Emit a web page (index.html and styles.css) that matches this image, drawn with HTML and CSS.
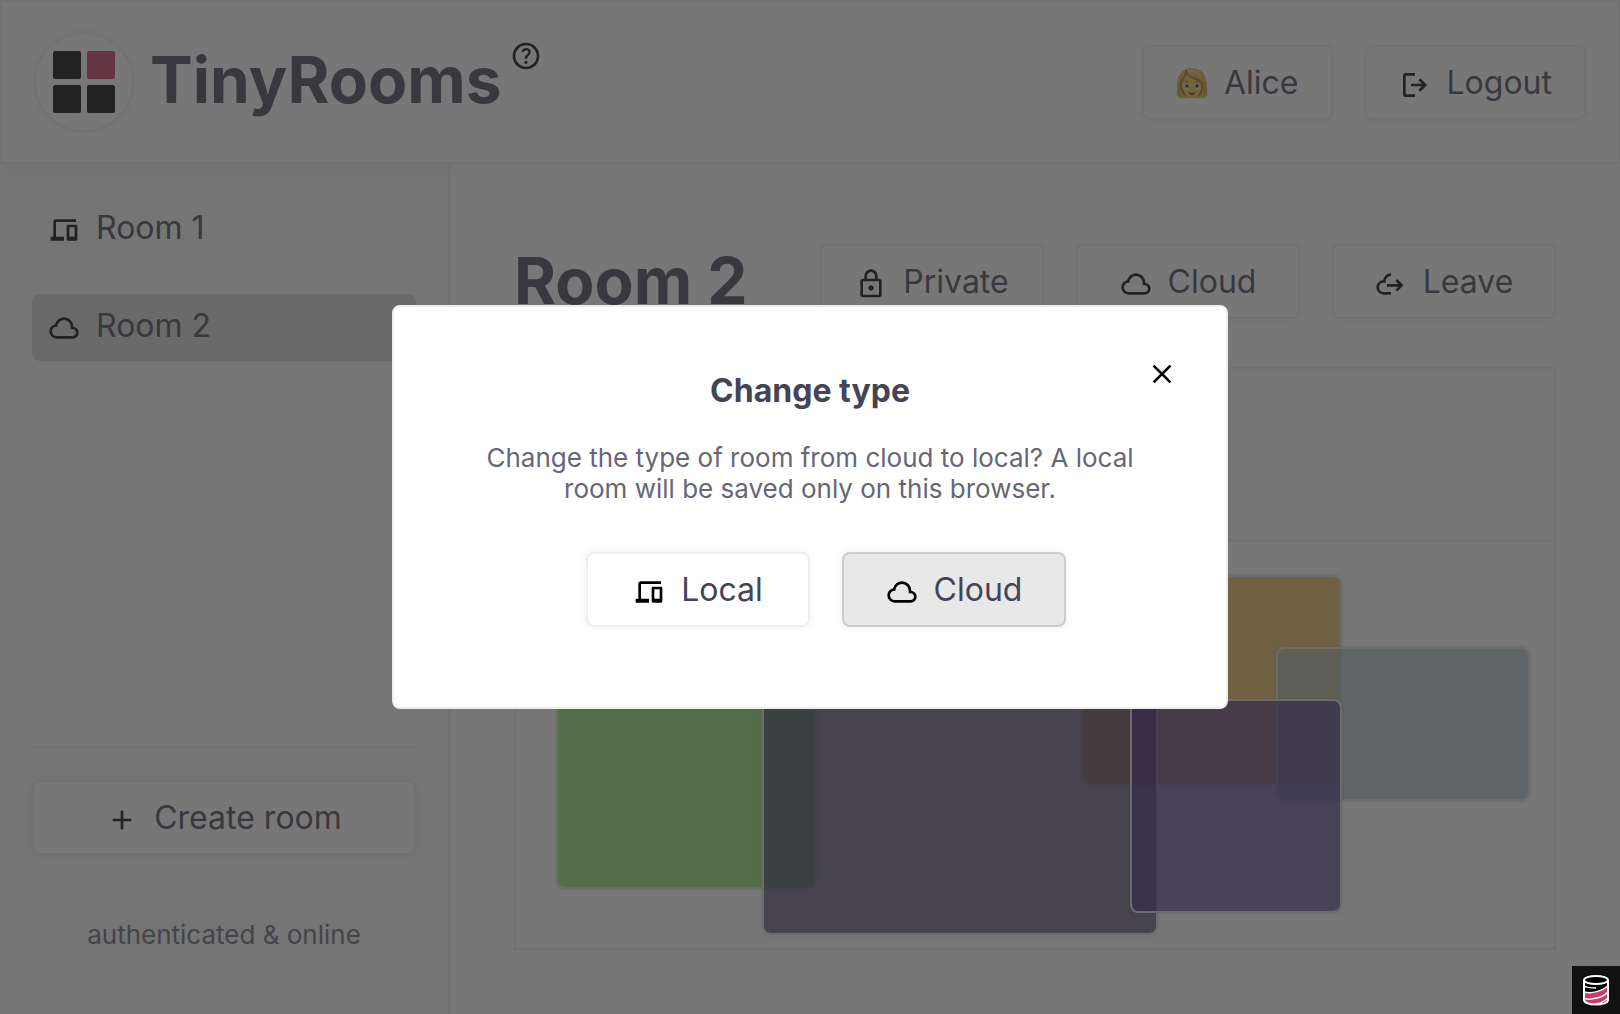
FILE: index.html
```html
<!DOCTYPE html>
<html lang="en">
<head>
<meta charset="utf-8">
<meta name="viewport" content="width=device-width, initial-scale=1">
<title>TinyRooms</title>
<link rel="stylesheet" href="styles.css">
</head>
<body>
<svg class="sprite" aria-hidden="true">
  <symbol id="cloud" viewBox="0 -960 960 960"><path d="M260-160q-91 0-155.500-63T40-377q0-78 47-139t123-78q25-92 100-149t170-57q117 0 198.500 81.500T760-520q69 8 114.500 59.500T920-340q0 75-52.500 127.500T740-160H260Zm0-80h480q42 0 71-29t29-71q0-42-29-71t-71-29h-60v-80q0-83-58.500-141.500T480-720q-83 0-141.500 58.500T280-520h-20q-58 0-99 41t-41 99q0 58 41 99t99 41Z"/></symbol>
  <symbol id="devices" viewBox="0 -960 960 960"><path d="M80-160v-120h80v-440q0-33 23.500-56.500T240-800h600v80H240v440h240v120H80Zm520 0q-17 0-28.500-11.500T560-200v-400q0-17 11.500-28.500T600-640h240q17 0 28.500 11.500T880-600v400q0 17-11.500 28.500T840-160H600Zm40-120h160v-280H640v280Z"/></symbol>
  <symbol id="lock" viewBox="0 -960 960 960"><path d="M240-80q-33 0-56.500-23.500T160-160v-400q0-33 23.500-56.500T240-640h40v-80q0-83 58.500-141.500T480-920q83 0 141.500 58.500T680-720v80h40q33 0 56.500 23.500T800-560v400q0 33-23.500 56.500T720-80H240Zm0-80h480v-400H240v400Zm240-120q33 0 56.500-23.500T560-360q0-33-23.500-56.500T480-440q-33 0-56.500 23.500T400-360q0 33 23.500 56.500T480-280ZM360-640h240v-80q0-50-35-85t-85-35q-50 0-85 35t-35 85v80Z"/></symbol>
  <symbol id="logout" viewBox="0 -960 960 960"><path d="M200-120q-33 0-56.500-23.500T120-200v-560q0-33 23.500-56.500T200-840h280v80H200v560h280v80H200Zm440-160-55-58 102-102H360v-80h327L585-622l55-58 200 200-200 200Z"/></symbol>
  <symbol id="help" viewBox="0 -960 960 960"><path d="M478-240q21 0 35.500-14.500T528-290q0-21-14.500-35.500T478-340q-21 0-35.500 14.500T428-290q0 21 14.500 35.500T478-240Zm-36-154h74q0-33 7.500-52t42.500-52q26-26 41-49.500t15-56.500q0-56-41-86t-97-30q-57 0-92.500 30T342-618l66 26q5-18 22.500-39t53.500-21q32 0 48 17.500t16 38.500q0 20-12 37.500T506-526q-44 39-54 59t-10 73Zm38 314q-83 0-156-31.500T197-197q-54-54-85.500-127T80-480q0-83 31.500-156T197-763q54-54 127-85.500T480-880q83 0 156 31.500T763-763q54 54 85.500 127T880-480q0 83-31.500 156T763-197q-54 54-127 85.500T480-80Zm0-80q134 0 227-93t93-227q0-134-93-227t-227-93q-134 0-227 93t-93 227q0 134 93 227t227 93Z"/></symbol>
  <symbol id="close" viewBox="0 -960 960 960"><path d="m256-200-56-56 224-224-224-224 56-56 224 224 224-224 56 56-224 224 224 224-56 56-224-224-224 224Z"/></symbol>
  <symbol id="add" viewBox="0 -960 960 960"><path d="M440-440H200v-80h240v-240h80v240h240v80H520v240h-80v-240Z"/></symbol>
  <symbol id="leave" viewBox="0 0 24 24"><path d="M12 5C9.200 5 7 7.200 7 10h-.5A4.500 4.500 0 0 0 2 14.500 4.500 4.500 0 0 0 6.500 19H12M9 13h11M16 9l4 4-4 4" fill="none" stroke="currentColor" stroke-width="2"/></symbol>
</svg>

<div class="app">
  <header class="header">
    <div class="brand">
      <svg class="logo" viewBox="0 0 96 96" aria-hidden="true">
        <rect x="17" y="17" width="28" height="28" rx="2"/>
        <rect class="accent" x="51" y="17" width="28" height="28" rx="2"/>
        <rect x="17" y="51" width="28" height="28" rx="2"/>
        <rect x="51" y="51" width="28" height="28" rx="2"/>
      </svg>
      <h1 class="title">TinyRooms</h1>
      <a class="help" href="#help" aria-label="Help"><svg><use href="#help"/></svg></a>
    </div>
    <nav class="account">
      <button class="button" type="button">
        <svg class="avatar" viewBox="0 0 32 32" aria-hidden="true">
          <path d="M16 2C7 2 1 9 1 19c0 4-1 8 0 11 1 2 5 2 7 2h16c2 0 6 0 7-2 1-3 0-7 0-11C31 9 25 2 16 2Z" fill="#e0b04c"/>
          <path d="M5 12C3 18 3 25 4 30M27 12c2 6 2 13 1 18" fill="none" stroke="#b98632" stroke-width="1"/>
          <path d="M6 17c2-2 4-5 5-8 3 4 10 5 14 9 1 6 0 9-3 12-3 2-9 2-12 0-3-3-5-8-4-13Z" fill="#f0c450"/>
          <path d="M10 4c0 3 1 5 3 6 4 3 11 3 13 7 1 6 0 10-4 13M9 8c0 3-3 6-4 9 0 6 2 10 5 13" fill="none" stroke="#94601f" stroke-width="1.500"/>
          <path d="M12 5c3-1 9 0 12 5" fill="none" stroke="#f6d684" stroke-width="2"/>
          <path d="M9 16q2-1 3 0M19 16q2-1 3 0" fill="none" stroke="#8f5c1c" stroke-width="1"/>
          <ellipse cx="11" cy="20" rx="2.500" ry="2.500" fill="#fff"/><ellipse cx="21" cy="20" rx="2.500" ry="2.500" fill="#fff"/>
          <circle cx="11" cy="20" r="1.800" fill="#2e170c"/><circle cx="21" cy="20" r="1.800" fill="#2e170c"/>
          <path d="M13 27q3 1 6 0-3 3-6 0Z" fill="#5e1820" stroke="#5e1820"/>
        </svg>
        <span>Alice</span>
      </button>
      <button class="button" type="button"><svg class="icon"><use href="#logout"/></svg><span>Logout</span></button>
    </nav>
  </header>

  <div class="body">
    <aside class="sidebar">
      <nav class="rooms">
        <a class="room" href="#room-1"><svg class="icon"><use href="#devices"/></svg><span>Room 1</span></a>
        <a class="room current" href="#room-2" aria-current="page"><svg class="icon"><use href="#cloud"/></svg><span>Room 2</span></a>
      </nav>
      <div class="sidebar-foot">
        <button class="button wide" type="button"><svg class="icon"><use href="#add"/></svg><span>Create room</span></button>
        <p class="status">authenticated &amp; online</p>
      </div>
    </aside>

    <main class="main">
      <div class="room-head">
        <h2 class="title">Room 2</h2>
        <div class="actions">
          <button class="button action" type="button"><svg class="icon"><use href="#lock"/></svg><span>Private</span></button>
          <button class="button action" type="button"><svg class="icon"><use href="#cloud"/></svg><span>Cloud</span></button>
          <button class="button action" type="button"><svg class="icon"><use href="#leave"/></svg><span>Leave</span></button>
        </div>
      </div>
      <section class="canvas" aria-label="Room canvas">
        <div class="tools"></div>
        <div class="stage">
          <div class="shape green"></div>
          <div class="shape yellow"></div>
          <div class="shape blue"></div>
          <div class="shape slate"></div>
          <div class="shape purple"></div>
        </div>
      </section>
    </main>
  </div>
</div>

<div class="backdrop">
  <section class="modal" role="dialog" aria-modal="true" aria-labelledby="modal-title">
    <button class="close" type="button" aria-label="Close"><svg><use href="#close"/></svg></button>
    <h3 class="modal-title" id="modal-title">Change type</h3>
    <p class="modal-text">Change the type of room from cloud to local? A local room will be saved only on this browser.</p>
    <div class="choices">
      <button class="button action" type="button"><svg class="icon"><use href="#devices"/></svg><span>Local</span></button>
      <button class="button action chosen" type="button" aria-pressed="true"><svg class="icon"><use href="#cloud"/></svg><span>Cloud</span></button>
    </div>
  </section>
</div>

<button class="inspector" type="button" aria-label="Open inspector">
  <svg viewBox="0 0 48 48" aria-hidden="true">
    <path d="M12 14v20c0 6 24 6 24 0V14Z" fill="#000"/>
    <path d="M12 26c8 2 18-1 24-6v6c-5 5-16 8-24 6Z" fill="#cf3a6b"/>
    <path d="M12 33c8 2 18-1 24-6v5c-4 4-11 6-17 6-4 0-7-1-7-3Z" fill="#cf3a6b"/>
    <path d="M12 26c8 2 18-1 24-6M12 32.500c8 2 19-1 24-6.500M18 38.500c7 0 14-2 18-6.500M12 20c3 2 7 2 12 2" fill="none" stroke="#fff" stroke-width="1.500"/>
    <ellipse cx="24" cy="14" rx="12" ry="4" fill="#000" stroke="#fff" stroke-width="2"/>
    <path d="M12 14v20c0 6 24 6 24 0V14" fill="none" stroke="#fff" stroke-width="2"/>
  </svg>
</button>
</body>
</html>
```

FILE: styles.css
```css
* {
  box-sizing: border-box;
}

body {
  margin: 0;
  font: 400 32px/39px Inter, "Liberation Sans", sans-serif;
  color: #445;
  background: #fff;
}

h1, h2, h3, p {
  margin: 0;
}

a {
  color: inherit;
  text-decoration: none;
}

.sprite {
  display: none;
}

.app {
  display: flex;
  flex-direction: column;
  min-height: 100vh;
}

/* Shared parts */

.title {
  font-size: 64px;
  line-height: 78px;
  font-weight: 700;
}

.icon {
  flex: none;
  width: 32px;
  height: 32px;
  margin-top: 5px;
  color: #000;
  fill: currentColor;
}

.button {
  display: flex;
  align-items: center;
  justify-content: center;
  gap: 16px;
  padding: 16px 32px;
  border: 2px solid #eee;
  border-radius: 8px;
  background: #fff;
  box-shadow: 0 0 8px #0001;
  color: #445;
  font: inherit;
}

.wide {
  width: 100%;
}

.action {
  width: 224px;
}

.chosen {
  background: #e8e8e8;
  border-color: #ccc;
}

/* Header */

.header {
  position: relative;
  display: flex;
  align-items: center;
  justify-content: space-between;
  padding: 30px 32px;
  border: 2px solid #eee;
  background: #fff;
  box-shadow: 0 0 16px #0001;
}

.brand,
.account {
  display: flex;
  align-items: center;
}

.brand {
  gap: 16px;
}

.brand .title {
  padding-bottom: 4px;
}

.account {
  gap: 32px;
}

.logo {
  width: 100px;
  height: 100px;
  border: 2px solid #eee;
  border-radius: 50%;
  box-shadow: 0 0 8px #0001;
}

.accent {
  fill: #ca3660;
}

.help {
  align-self: flex-start;
  margin: 8px 0 0 -8px;
}

.help svg,
.close svg {
  display: block;
  width: 32px;
  height: 32px;
}

.avatar {
  width: 32px;
  height: 32px;
}

/* Sidebar */

.body {
  display: flex;
  flex: 1;
}

.sidebar {
  display: flex;
  flex-direction: column;
  flex: none;
  width: 450px;
  padding: 32px;
  border-right: 2px solid #eee;
  background: #f8f8f8;
  box-shadow: 0 0 8px #0001;
}

.rooms {
  display: flex;
  flex: 1;
  flex-direction: column;
  gap: 31px;
}

.room {
  display: flex;
  align-items: center;
  gap: 16px;
  padding: 12px 16px 16px;
  border-radius: 8px;
}

.current {
  background: #d8d8d8;
}

.sidebar-foot {
  padding-top: 32px;
  border-top: 2px solid #eee;
}

.status {
  padding: 64px 0 32px;
  color: #667;
  font-size: 26px;
  line-height: 31px;
  text-align: center;
}

/* Room */

.main {
  display: flex;
  flex: 1;
  flex-direction: column;
  gap: 47px;
  padding: 78px 64px 64px;
}

.room-head,
.actions {
  display: flex;
  align-items: center;
}

.room-head {
  justify-content: space-between;
}

.actions {
  gap: 32px;
}

.canvas {
  display: flex;
  flex: 1;
  flex-direction: column;
  border: 2px solid #eee;
}

.tools {
  height: 173px;
  border-bottom: 2px solid #eee;
  background: #f8f8f8;
}

.stage {
  position: relative;
  flex: 1;
  min-height: 404px;
}

.shape {
  position: absolute;
  border: 2px solid #ddd;
  border-radius: 8px;
  background-clip: padding-box;
  box-shadow: 0 0 4px #0002;
}

.green {
  left: 40px;
  top: 80px;
  width: 260px;
  height: 267px;
  background-color: #61d634aa;
}

.yellow {
  left: 566px;
  top: 33px;
  width: 260px;
  height: 210px;
  background-color: #df9c1eaa;
}

.blue {
  left: 760px;
  top: 105px;
  width: 254px;
  height: 154px;
  background-color: #97b3bcaa;
}

.slate {
  left: 246px;
  top: 60px;
  width: 396px;
  height: 333px;
  background-color: #271950aa;
}

.purple {
  left: 614px;
  top: 157px;
  width: 212px;
  height: 214px;
  background-color: #301578aa;
}

/* Dialog */

.backdrop {
  position: fixed;
  inset: 0;
  display: grid;
  place-items: center;
  background: #333a;
}

.modal {
  position: relative;
  width: 836px;
  max-width: 100%;
  padding: 64px 64px 80px;
  border: 2px solid #eee;
  border-radius: 8px;
  background: #fff;
  text-align: center;
}

.modal-title {
  font-size: 32px;
  line-height: 39px;
  font-weight: 700;
}

.modal-text {
  margin: 32px 0 48px;
  color: #667;
  font-size: 26px;
  line-height: 31px;
}

.choices {
  display: flex;
  justify-content: center;
  gap: 32px;
  padding-left: 32px;
}

.close {
  position: absolute;
  top: 51px;
  right: 48px;
  padding: 0;
  border: 0;
  background: none;
  color: #000;
}

.inspector {
  position: fixed;
  right: 0;
  bottom: 0;
  width: 48px;
  height: 48px;
  padding: 0;
  border: 0;
  background: #111;
}

.inspector svg {
  display: block;
}
```
